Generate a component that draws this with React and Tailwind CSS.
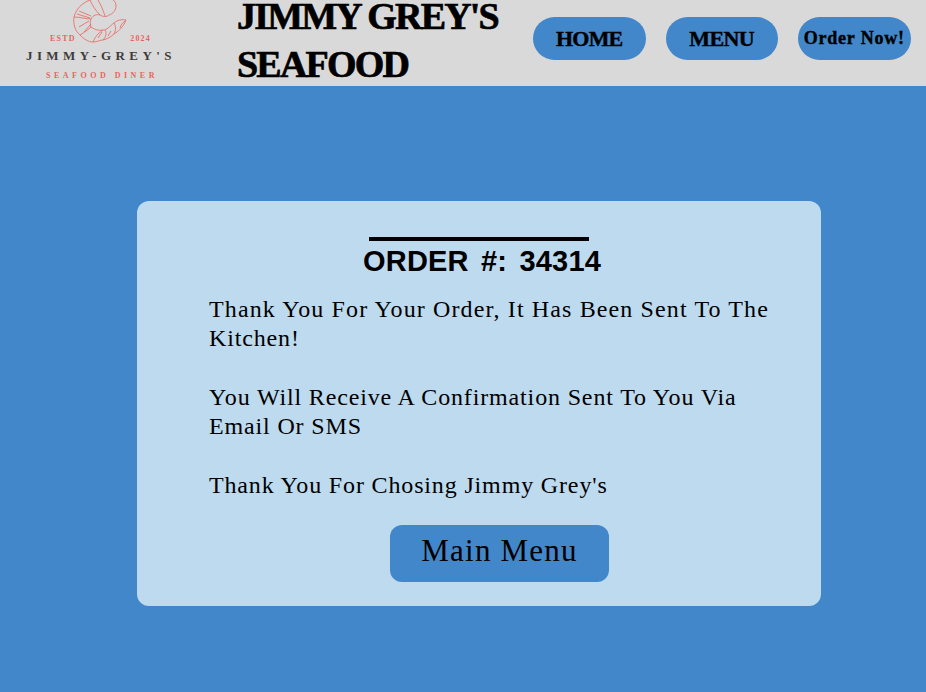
import React from "react";

function ShrimpLogo() {
    return (
        <svg
            className="absolute left-[70px] top-0"
            width="60"
            height="44"
            viewBox="0 0 60 44"
            fill="none"
            stroke="#e8655d"
            strokeWidth="0.8"
        >
            {/* shell */}
            <path d="M20 0C12 3 6 9 4 17C3 24 5 31 10 35C14 39 18 42 23 42C27 42 30 40 33 40C37 39 41 37 44 34C49 31 54 26 56 20C53 19 47 20 44 23C40 26 37 30 33 30C28 31 24 29 21 27C20 24 20 21 21 19C23 15 27 14 30 15C33 17 37 17 39 15C43 14 46 10 46 6C46 3 45 1 43 0" />
            <path d="M20 0C22 5 26 11 30 15" />
            <path d="M28 0C31 5 33 10 35 16" />
            <path d="M4 17C10 17 16 19 21 19" />
            <path d="M10 35C15 32 19 29 21 27" />
            <path d="M23 42C25 37 28 33 33 30" />
            <path d="M33 40C36 37 37 33 35 30" />
            <path d="M44 34C46 30 46 26 44 23" />
            <path d="M50 28C51 25 52 23 55 21" />
            <path d="M9 11L21 16M7 14L20 18M9 27L19 21M14 32L21 24M28 38L32 32M38 36L41 31" />
        </svg>
    );
}

function NavButton({ children, className }) {
    return (
        <button
            className={
                "h-[43px] w-[112.5px] rounded-full bg-[#4287c9] font-['Liberation_Serif',serif] font-bold text-black [-webkit-text-stroke:0.4px_black] " +
                className
            }
        >
            {children}
        </button>
    );
}

export default function App() {
    return (
        <div className="w-[926px] h-[692px] overflow-hidden bg-[#4287c9]">
            <header className="flex h-[86px] items-start overflow-hidden bg-[#d9d9d9]">
                <div className="relative h-[86px] w-[237px] shrink-0 font-['Liberation_Serif',serif]">
                    <ShrimpLogo />
                    <div className="absolute left-[50px] top-[34px] flex w-[101px] justify-between text-[8px] leading-[9px] font-bold tracking-[1.2px] text-[#e8655d]">
                        <span>ESTD</span>
                        <span>2024</span>
                    </div>
                    <div className="absolute left-[26px] top-[48px] whitespace-nowrap text-[13px] leading-[16px] font-bold tracking-[4.4px] text-[#3f3b3a]">
                        JIMMY-GREY'S
                    </div>
                    <div className="absolute left-[46px] top-[71px] whitespace-nowrap text-[8px] leading-[10px] font-bold tracking-[3.5px] text-[#e8655d]">
                        SEAFOOD DINER
                    </div>
                </div>
                <h1 className="flex w-[296px] shrink-0 flex-col gap-[16px] font-['Liberation_Serif',serif] text-[38px] leading-[32px] font-bold tracking-[-1.8px] whitespace-nowrap text-black [-webkit-text-stroke:0.7px_black]">
                    <span>JIMMY GREY'S</span>
                    <span>SEAFOOD</span>
                </h1>
                <nav className="mt-[17px] flex gap-[20px]">
                    <NavButton className="text-[22px] tracking-[-0.8px]">HOME</NavButton>
                    <NavButton className="text-[22px] tracking-[-0.6px]">MENU</NavButton>
                    <NavButton className="text-[18px] tracking-[0.8px]">Order Now!</NavButton>
                </nav>
            </header>
            <main className="pl-[137px] pt-[115px]">
                <section className="flex h-[405px] w-[684px] flex-col rounded-[12px] bg-[#bddaee] pt-[36px] text-black">
                    <div className="ml-[232px] h-[4px] w-[220px] bg-black" />
                    <h2 className="ml-[226px] mt-[1px] font-['Liberation_Sans',sans-serif] text-[29px] leading-[38px] font-bold tracking-[0.2px] [word-spacing:4px] whitespace-nowrap">
                        ORDER #: 34314
                    </h2>
                    <div className="ml-[72px] mt-[15px] w-[600px] font-['Liberation_Serif',serif] text-[24px] leading-[29.4px] tracking-[0.85px]">
                        <p>
                            <span className="tracking-[1.12px]">
                                Thank You For Your Order, It Has Been Sent To The
                            </span>
                            <br />
                            Kitchen!
                        </p>
                        <p className="mt-[29px]">
                            You Will Receive A Confirmation Sent To You Via
                            <br />
                            Email Or SMS
                        </p>
                        <p className="mt-[29px]">Thank You For Chosing Jimmy Grey's</p>
                    </div>
                    <button className="ml-[253px] mt-[25px] h-[57px] w-[219px] rounded-[12px] bg-[#4287c9] pb-[4px] font-['Liberation_Serif',serif] text-[31px] tracking-[1.2px] text-black">
                        Main Menu
                    </button>
                </section>
            </main>
        </div>
    );
}
